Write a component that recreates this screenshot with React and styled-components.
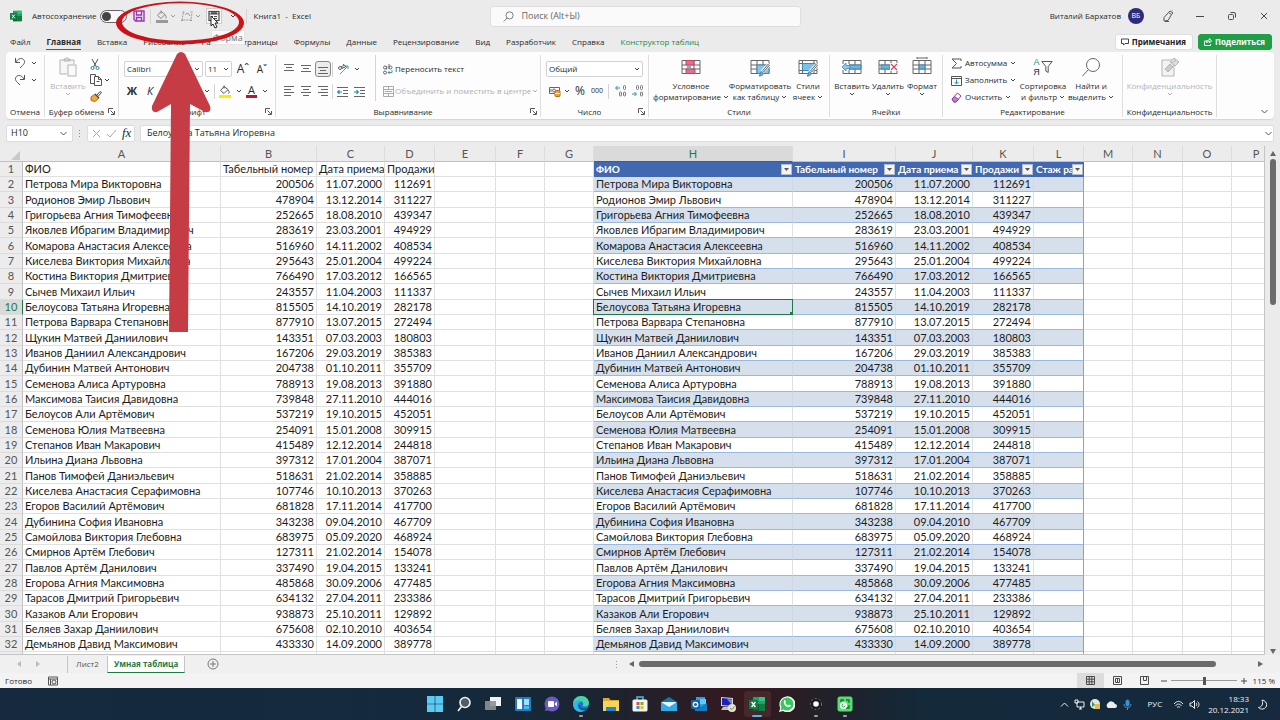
import React from 'react';
import styled, { createGlobalStyle, css } from 'styled-components';

const people = [
  ['Петрова Мира Викторовна', '200506', '11.07.2000', '112691'],
  ['Родионов Эмир Львович', '478904', '13.12.2014', '311227'],
  ['Григорьева Агния Тимофеевна', '252665', '18.08.2010', '439347'],
  ['Яковлев Ибрагим Владимирович', '283619', '23.03.2001', '494929'],
  ['Комарова Анастасия Алексеевна', '516960', '14.11.2002', '408534'],
  ['Киселева Виктория Михайловна', '295643', '25.01.2004', '499224'],
  ['Костина Виктория Дмитриевна', '766490', '17.03.2012', '166565'],
  ['Сычев Михаил Ильич', '243557', '11.04.2003', '111337'],
  ['Белоусова Татьяна Игоревна', '815505', '14.10.2019', '282178'],
  ['Петрова Варвара Степановна', '877910', '13.07.2015', '272494'],
  ['Щукин Матвей Даниилович', '143351', '07.03.2003', '180803'],
  ['Иванов Даниил Александрович', '167206', '29.03.2019', '385383'],
  ['Дубинин Матвей Антонович', '204738', '01.10.2011', '355709'],
  ['Семенова Алиса Артуровна', '788913', '19.08.2013', '391880'],
  ['Максимова Таисия Давидовна', '739848', '27.11.2010', '444016'],
  ['Белоусов Али Артёмович', '537219', '19.10.2015', '452051'],
  ['Семенова Юлия Матвеевна', '254091', '15.01.2008', '309915'],
  ['Степанов Иван Макарович', '415489', '12.12.2014', '244818'],
  ['Ильина Диана Львовна', '397312', '17.01.2004', '387071'],
  ['Панов Тимофей Даниэльевич', '518631', '21.02.2014', '358885'],
  ['Киселева Анастасия Серафимовна', '107746', '10.10.2013', '370263'],
  ['Егоров Василий Артёмович', '681828', '17.11.2014', '417700'],
  ['Дубинина София Ивановна', '343238', '09.04.2010', '467709'],
  ['Самойлова Виктория Глебовна', '683975', '05.09.2020', '468924'],
  ['Смирнов Артём Глебович', '127311', '21.02.2014', '154078'],
  ['Павлов Артём Данилович', '337490', '19.04.2015', '133241'],
  ['Егорова Агния Максимовна', '485868', '30.09.2006', '477485'],
  ['Тарасов Дмитрий Григорьевич', '634132', '27.04.2011', '233386'],
  ['Казаков Али Егорович', '938873', '25.10.2011', '129892'],
  ['Беляев Захар Даниилович', '675608', '02.10.2010', '403654'],
  ['Демьянов Давид Максимович', '433330', '14.09.2000', '389778'],
];

const columns = [
  ['A', 198], ['B', 96], ['C', 68], ['D', 50], ['E', 61], ['F', 49], ['G', 49], ['H', 199],
  ['I', 103], ['J', 77], ['K', 61], ['L', 50], ['M', 49], ['N', 50], ['O', 49], ['P', 49],
];

const GlobalStyle = createGlobalStyle`
  * { box-sizing: border-box; }
  body { margin: 0; overflow: hidden; }
  button, input, select {
    font: inherit;
    color: inherit;
    background: none;
    border: 0;
    margin: 0;
    padding: 0;
    outline: 0;
  }
  button { display: flex; align-items: center; justify-content: center; white-space: nowrap; }
  svg { display: block; flex: none; }
`;

/* ---------- icons ---------- */

const Svg = ({ w = 16, h = w, box, children, ...rest }) => (
  <svg width={w} height={h} viewBox={box || `0 0 ${w} ${h}`} fill="none" stroke="#4a4a4a" strokeWidth="1" aria-hidden="true" {...rest}>
    {children}
  </svg>
);

const Chevron = ({ size = 6, color = '#444' }) => (
  <Svg w={size} box="0 0 6 6" stroke={color}><path d="M1 2l2 2 2-2" /></Svg>
);

const ThinChevron = ({ size = 9 }) => (
  <Svg w={size} box="0 0 9 9" stroke="#555"><path d="M1.500 3l3 3 3-3" /></Svg>
);

const ExcelLogo = ({ size = 12 }) => (
  <Svg w={size} box="0 0 16 16" stroke="none">
    <path d="M4 1h11a1 1 0 0 1 1 1v12a1 1 0 0 1-1 1H4z" fill="#21a366" />
    <path d="M4 8h6v7H4z" fill="#185c37" />
    <path d="M10 8h6v6a1 1 0 0 1-1 1h-5z" fill="#107c41" />
    <path d="M10 1h5a1 1 0 0 1 1 1v3h-6z" fill="#33c481" />
    <rect y="4" width="9" height="9" rx="1" fill="#107c41" />
    <path d="M2.600 6l3.800 5M6.400 6l-3.800 5" stroke="#fff" strokeWidth="1.300" />
  </Svg>
);

const SaveIcon = () => (
  <Svg w={12} stroke="#9b35b5" strokeWidth="1.400">
    <path d="M1 1h10v10H2.500L1 9.500z M3.500 1v4h5V1 M3.500 11V7.500h5V11" />
  </Svg>
);

const BucketIcon = ({ bar = '#f8f000', stroke = '#555' }) => (
  <Svg w={12} h={13} stroke={stroke}>
    <path d="M5 1.500L1.500 5.500l3.500 3 4-4zM5 3.500V0.500M9 5c1.500 1.500 1.500 3 .5 3.500" />
    <path d="M0 11.500h12" stroke={bar} strokeWidth="3" />
  </Svg>
);

const ShapeIcon = () => (
  <Svg w={12} stroke="#999">
    <path d="M2.500 2.500L1 10h9l1-7" strokeDasharray="2 1" /><path d="M1.500 2h2M9.500 2h2M0 10.500h2M9 10.500h2M4 4.500l3-1.500 2 3" />
  </Svg>
);

const FormIcon = () => (
  <Svg w={12} strokeWidth="1.200">
    <rect x="1" y="1.500" width="10" height="9" />
    <path d="M1 4h10M3 2.800h6M3 6.500h2M6 6.500h3M3 8.500h2M6 8.500h3" />
  </Svg>
);

const SearchIcon = ({ size = 11 }) => (
  <Svg w={size} box="0 0 20 20" stroke="#666" strokeWidth={size > 14 ? 1 : 1.5}>
    <circle cx="12" cy="8" r="6.500" /><path d="M7.500 12.500L1.500 19" />
  </Svg>
);

const PenIcon = () => (
  <Svg w={12} stroke="#555"><path d="M2 7.500L6.500 2.500l3 2L6 10.500l-4 .5zM6.500 2.500L8 1l3 2-1.500 1.500M3 11.500h4M10 .5l.5-.5" /></Svg>
);

const UndoIcon = ({ flip }) => (
  <Svg w={12} stroke="#555" transform={flip ? 'scale(-1 1)' : undefined}>
    <path d="M1.500 1v4.500H6M2 5C4 1.500 7.500.5 9.500 2.500s1 4-1 6L6 11" />
  </Svg>
);

const PasteIcon = () => (
  <Svg w={18} h={20} stroke="#b4b4b4">
    <path d="M8 17H1V3h14v4M5 4V2h2c0-2 2-2 2 0h2v2z" fill="#f6f6f6" />
    <rect x="9" y="8" width="8" height="11" fill="#fafafa" />
  </Svg>
);

const ScissorsIcon = () => (
  <Svg w={10} h={11} stroke="#555">
    <path d="M2 0l4.500 8M8 0L3.500 8" /><circle cx="2.500" cy="9" r="1.500" stroke="#2a8ab8" /><circle cx="7.500" cy="9" r="1.500" stroke="#2a8ab8" />
  </Svg>
);

const CopyIcon = () => (
  <Svg w={12} stroke="#555"><path d="M4.500 9.500h-4v-9h5v2M4.500 2.500h4l3 3v6h-7zM8.500 2.500v3h3M6.500 7.500h3" /></Svg>
);

const BrushIcon = () => (
  <Svg w={12} h={11}>
    <path d="M7 4l3-3.500 1.500 1L8.500 5" /><path d="M1 6l4-3 4 4-4 3.500-4-1z" fill="#f2a83b" stroke="#b86c1a" />
    <path d="M5 3l4 4" strokeWidth="1.500" />
  </Svg>
);

const LinesIcon = ({ kind = 'left', v = 0 }) => {
  const rows = {
    left: 'M0 1.500h10M0 4.500h7M0 7.500h10M0 10.500h7',
    center: 'M0 1.500h10M2 4.500h6M0 7.500h10M2 10.500h6',
    right: 'M0 1.500h10M3 4.500h7M0 7.500h10M3 10.500h7',
    three: 'M0 2.500h10M2 5.500h6M0 8.500h10',
  };
  return <Svg w={10} h={12} stroke="#666"><path d={rows[kind]} transform={`translate(0 ${v})`} /></Svg>;
};

const OrientIcon = () => (
  <Svg w={12} stroke="#666">
    <path d="M3 11L11 3M8 3h3v3" stroke="#4c9fb8" /><circle cx="3" cy="5" r="1.500" /><path d="M4.500 3l1 3M6 1l3 3" /><circle cx="7" cy="3.500" r="1.300" />
  </Svg>
);

const IndentIcon = ({ flip }) => (
  <Svg w={11} h={11} stroke="#666">
    <path d="M0 1.500h11M6 4.500h5M6 7.500h5M0 10.500h11" />
    <path d={flip ? 'M0 6h4M2.500 4.300L4.300 6 2.500 7.700' : 'M5 6H1M2.500 4.300L.700 6l1.800 1.700'} stroke="#1f93a8" strokeWidth="1.200" />
  </Svg>
);

const WrapIcon = () => (
  <Svg w={10} h={11} stroke="#666">
    <circle cx="2" cy="3.500" r="1.500" /><path d="M3.700 2v3.500M6 0v5" /><circle cx="7.500" cy="3.500" r="1.500" />
    <circle cx="2" cy="8.500" r="1.500" /><path d="M9 6v2.500H5M6.500 7L5 8.500 6.500 10" stroke="#3d9ab0" />
  </Svg>
);

const MergeIcon = () => (
  <Svg w={11} h={11} stroke="#aaa"><path d="M.5.5h10v10H.5zM.5 3.500h10M.5 7.500h10M5.500.5v3M5.500 7.500v3M2 5.500h7" /></Svg>
);

const MoneyIcon = () => (
  <Svg w={12} h={11} stroke="#666">
    <path d="M.5 1.500h10v6H.5z" /><circle cx="5" cy="4.500" r="1.500" /><path d="M2 3v3" />
    <rect x="6" y="4.500" width="5" height="6" rx="1" fill="#e8a33d" stroke="#b56f1e" /><path d="M6 7.500h5" stroke="#fff" />
  </Svg>
);

const DecimalIcon = ({ less }) => (
  <Svg w={11} h={12} stroke="#777">
    {less ? (
      <>
        <path d="M0 9h4M2.500 7L4.500 9l-2 2" stroke="#1f93a8" />
        <rect x="4.500" y=".5" width="2" height="4" rx="1" /><rect x="8.500" y=".5" width="2" height="4" rx="1" />
        <rect x="8.500" y="7" width="2" height="4" rx="1" />
      </>
    ) : (
      <>
        <path d="M5 3H1M2.500 1L.5 3l2 2" stroke="#1f93a8" />
        <rect x="8.500" y=".5" width="2" height="4" rx="1" /><rect x="4.500" y="7" width="2" height="4" rx="1" />
        <rect x="8.500" y="7" width="2" height="4" rx="1" />
      </>
    )}
  </Svg>
);

const GridIcon = ({ kind }) => (
  <Svg w={20} h={20} stroke="#666">
    {kind !== 'styles' && <path d="M1 3.500h18v13H1zM1 8h18M1 12h18M7 3.500v13M13 3.500v13" />}
    {kind === 'cond' && (
      <>
        <path d="M5 3.500h8V8H5zM5 12h9v4.500H5z" fill="#ef6a84" stroke="#c94460" />
        <path d="M6 8.500h4v3H6z" fill="#6bb4e0" stroke="none" />
      </>
    )}
    {kind === 'table' && <path d="M7 8h12v8.500H7z" fill="#86c5ea" stroke="#3f87b3" />}
    {kind === 'styles' && <path d="M1 3.500h18v13H1zM1 6.500h18M1 13.500h18M4.500 3.500v13M16 3.500v13" />}
    {kind === 'styles' && <path d="M4.500 6.500h12v7h-12z" fill="#7bc0ea" stroke="#3f87b3" />}
    {(kind === 'table' || kind === 'styles') && (
      <>
        <path d="M19.500 7L12 15" stroke="#fff" strokeWidth="4" />
        <path d="M19 7.500l-6 7" stroke="#666" strokeWidth="2.500" /><path d="M19 7.500l-6 7" stroke="#fff" />
        <path d="M9 19c2 0 4-.5 4.500-3l-2-1.500C10 15 11 17 9 19z" fill="#5fb0e0" stroke="#3f87b3" />
      </>
    )}
    {kind === 'insert' && (
      <>
        <path d="M0 7h7v6H0z" fill="#fdfdfd" stroke="none" />
        <path d="M7 8h12v4H7z" fill="#6bb4e0" stroke="#3f87b3" />
        <path d="M0 10l4-4v2.500h4v3H4V14z" fill="#8ccbee" stroke="#3f87b3" strokeWidth=".8" />
      </>
    )}
    {kind === 'delete' && (
      <>
        <path d="M3 8h9v4H3z" fill="#6bb4e0" stroke="#3f87b3" /><path d="M12 6h8v8h-8z" fill="#fff" stroke="none" />
        <path d="M13 7l6 6M19 7l-6 6" stroke="#d8455f" strokeWidth="1.300" />
      </>
    )}
    {kind === 'format' && (
      <>
        <path d="M7 8h6v4H7z" fill="#6bb4e0" stroke="#3f87b3" /><path d="M5 1h10M5 0v2M15 0v2" />
      </>
    )}
  </Svg>
);

const SumIcon = () => <Svg w={11} h={11} stroke="#555"><path d="M10 3V1H1l4.500 4.500L1 10h9V8" /></Svg>;
const FillIcon = () => (
  <Svg w={11} h={11} stroke="#555"><path d="M.5 1.500h10v9H.5zM.5 3.500h10" /><path d="M5.500 4.500v4.500M3.500 7l2 2 2-2" stroke="#1f93a8" /></Svg>
);
const EraserIcon = () => (
  <Svg w={11} h={11} stroke="#8d3ba0"><path d="M6.500 1l3.500 3-5 6H3L1 7z" fill="#fff" /><path d="M3.500 4.500l4 3L5 10H3L1 7z" fill="#c77ad6" /></Svg>
);
const FunnelIcon = () => (
  <Svg w={12} h={14} stroke="#555"><path d="M.8 1.500h10.400L7.200 6.500v6l-2.400-1.500V6.500z" /></Svg>
);
const SecretIcon = () => (
  <Svg w={20} h={20} stroke="#b4b4b4">
    <path d="M2 3h12v16H2z" fill="#f3f3f3" /><path d="M5 12l5-5 3 3-5 5z" fill="#ccc" />
    <path d="M10 5l4-4 5 4-4 4zM12 6l4-3" fill="#ddd" />
  </Svg>
);
const Launcher = () => (
  <Svg w={7} h={7} stroke="#555" strokeWidth="1"><path d="M.5 5V.5H5M2.500 2.500l3.500 3.500M6.500 3v3.500H3" /></Svg>
);

/* ---------- window chrome ---------- */

const Window = styled.div`
  height: 100vh;
  display: flex;
  flex-direction: column;
  position: relative;
  overflow: hidden;
  background: #ebebeb;
  color: #2a2a2a;
  font: 8px/12px "Open Sans", "Noto Sans", sans-serif;
`;

const TitleBar = styled.header`
  flex: none;
  height: 32px;
  padding-left: 10px;
  display: grid;
  grid-template-columns: 1fr 311px 1fr;
  align-items: center;
`;

const Cluster = styled.div`
  display: flex;
  align-items: center;
  gap: ${({ $gap = 0 }) => $gap}px;
  ${({ $end }) => $end && 'justify-content: flex-end;'}
  ${({ $push }) => $push && 'margin-left: auto;'}
  ${({ $pad }) => $pad && `padding: ${$pad};`}
  white-space: nowrap;
`;

const AutoSave = styled.label`
  display: flex;
  align-items: center;
  gap: 3px;
  margin: 0 6px 0 10px;
`;

const Toggle = styled.input`
  appearance: none;
  width: 27px;
  height: 13px;
  border: 1px solid #666;
  border-radius: 7px;
  background: #f8f8f8;
  &::before {
    content: '';
    display: block;
    width: 9px;
    height: 9px;
    margin: 1px;
    border-radius: 50%;
    background: #444;
  }
`;

const QuickButton = styled.button`
  width: ${({ $active }) => ($active ? 16 : 12)}px;
  height: 16px;
  ${({ $active }) => $active && 'background: #f8f8f8; border: 1px solid #ccc;'}
`;

const Divider = styled.span`
  width: 1px;
  height: ${({ $h = 15 }) => $h}px;
  background: #d4d4d4;
`;

const SearchBox = styled.label`
  height: 21px;
  display: flex;
  align-items: center;
  gap: 8px;
  padding: 0 12px;
  border: 1px solid #dedede;
  border-radius: 3px;
  background: #fafafa;
  font-size: 9px;
  input { flex: 1; &::placeholder { color: #666; opacity: 1; } }
`;

const Avatar = styled.span`
  width: 16px;
  height: 16px;
  border-radius: 50%;
  background: #2f2a7c;
  color: #fff;
  font-size: 7px;
  line-height: 16px;
  text-align: center;
`;

const WindowButton = styled.button`
  width: 32px;
  height: 24px;
`;

const TabBar = styled.nav`
  flex: none;
  height: 20px;
  padding: 0 8px 0 10px;
  display: flex;
  align-items: center;
  gap: 16px;
  white-space: nowrap;
`;

const Tab = styled.a`
  height: 16px;
  line-height: 16px;
  color: ${({ $special }) => ($special ? '#1e8a45' : '#2a2a2a')};
  text-decoration: none;
  ${({ $active }) => $active && css`
    font-weight: 700;
    border-bottom: 1px solid #1e7a45;
  `}
`;

const HeadButton = styled.button`
  height: 16px;
  padding: 0 6px 0 5px;
  gap: 3px;
  border-radius: 3px;
  font-weight: 700;
  background: ${({ $green }) => ($green ? '#1f9d47' : '#fff')};
  color: ${({ $green }) => ($green ? '#fff' : '#222')};
  border: 1px solid ${({ $green }) => ($green ? '#1f9d47' : '#dedede')};
`;

/* ---------- ribbon ---------- */

const Ribbon = styled.section`
  flex: none;
  height: 67px;
  margin: 0 6px;
  display: flex;
  padding: 3px 0 2px;
  background: #fdfdfd;
  border-radius: 4px;
  box-shadow: 0 1px 1px #d4d4d4;
`;

const GroupBox = styled.div`
  width: ${({ $w }) => $w}px;
  display: flex;
  flex-direction: column;
  border-right: 1px solid #dedede;
  flex: none;
`;

const GroupBody = styled.div`
  flex: 1;
  display: flex;
  padding: 0 ${({ $pad = 5 }) => $pad}px;
  gap: ${({ $gap = 0 }) => $gap}px;
  justify-content: ${({ $align = 'flex-start' }) => $align};
`;

const GroupFooter = styled.div`
  height: 12px;
  display: flex;
  align-items: center;
  justify-content: center;
  padding-right: ${({ $launch }) => ($launch ? 3 : 0)}px;
  line-height: 11px;
  white-space: nowrap;
  ${({ $launch }) => $launch && 'span { flex: 1; text-align: center; }'}
`;

const Stack = styled.div`
  display: flex;
  flex-direction: column;
  justify-content: ${({ $top }) => ($top ? 'flex-start' : 'center')};
  gap: ${({ $gap = 0 }) => $gap}px;
  ${({ $grow }) => $grow && 'flex: 1;'}
  ${({ $w }) => $w && `width: ${$w}px;`}
  ${({ $pad }) => $pad && `padding: ${$pad};`}
  min-width: 0;
`;

const Tool = styled.button`
  height: 16px;
  min-width: ${({ $w = 12 }) => $w}px;
  gap: ${({ $gap = 5 }) => $gap}px;
  justify-content: ${({ $left }) => ($left ? 'flex-start' : 'center')};
  color: ${({ $off }) => ($off ? '#b0b0b0' : '#2a2a2a')};
  ${({ $pressed }) => $pressed && 'background: #ececec; border: 1px solid #888; border-radius: 3px;'}
`;

const BigTool = styled.button`
  flex-direction: column;
  justify-content: flex-start;
  width: ${({ $w }) => $w}px;
  padding-top: 2px;
  line-height: 11px;
  color: ${({ $off }) => ($off ? '#b4b4b4' : '#2a2a2a')};
  > svg:first-child, > div:first-child { margin-bottom: 3px; }
`;

const Letter = styled.span`
  font-size: ${({ $size = 12 }) => $size}px;
  font-weight: ${({ $bold }) => ($bold ? 700 : 400)};
  font-style: ${({ $italic }) => ($italic ? 'italic' : 'normal')};
  text-decoration: ${({ $line }) => ($line ? 'underline' : 'none')};
  ${({ $color }) => $color && `color: ${$color};`}
  ${({ $tight }) => $tight && 'font-family: "Liberation Sans", sans-serif; line-height: 10px;'}
  ${({ $bar }) => $bar && `border-bottom: 3px solid ${$bar}; padding: 0 2px; line-height: 10px;`}
`;

const Picker = styled.div`
  position: relative;
  width: ${({ $w }) => $w}px;
  height: 16px;
  border: 1px solid #d2d2d2;
  border-radius: 2px;
  background: #fff;
  select { appearance: none; width: 100%; height: 100%; padding-left: 2px; }
  svg { position: absolute; right: 2px; top: 4px; pointer-events: none; }
`;

const Select = ({ w, label, value }) => (
  <Picker $w={w}>
    <select aria-label={label} defaultValue={value}><option>{value}</option></select>
    <Chevron />
  </Picker>
);

const Group = ({ w, title, launcher, children, ...body }) => (
  <GroupBox $w={w}>
    <GroupBody {...body}>{children}</GroupBody>
    <GroupFooter $launch={launcher}>
      <span>{title}</span>
      {launcher && <button aria-label={`${title}: параметры`}><Launcher /></button>}
    </GroupFooter>
  </GroupBox>
);

/* ---------- formula bar ---------- */

const FormulaRow = styled.div`
  flex: none;
  height: 27px;
  padding: 5px 6px 4px;
  display: flex;
  gap: 5px;
  align-items: center;
`;

const FormulaBox = styled.div`
  height: 17px;
  display: flex;
  align-items: center;
  gap: 5px;
  background: #fff;
  border: 1px solid #dcdcdc;
  border-radius: 2px;
  padding: 0 4px;
  font-size: 9px;
  ${({ $w }) => ($w ? `width: ${$w}px;` : 'flex: 1; padding-left: 6px; padding-right: 0;')}
  input { flex: 1; min-width: 0; }
  em { font: italic 13px/14px "Liberation Serif", serif; }
`;

/* ---------- sheet ---------- */

const SheetArea = styled.main`
  flex: 1;
  min-height: 0;
  display: flex;
`;

const SheetView = styled.div`
  flex: 1;
  min-width: 0;
  overflow: hidden;
  border-right: 1px solid #c4c4c4;
  border-bottom: 1px solid #c4c4c4;
  background: #fff;
`;

const Sheet = styled.table`
  width: 100%;
  min-width: 1281px;
  table-layout: fixed;
  border-collapse: separate;
  border-spacing: 0;
  font: 11px/14px Lato, sans-serif;
  color: #1c1c1c;
  thead tr { height: 16px; }
  tbody tr { height: 15px; }
  tbody tr:nth-child(3n) { height: 16px; }
`;

const ColHead = styled.th`
  padding: 0;
  font-weight: 400;
  color: ${({ $active }) => ($active ? '#1e7a45' : '#555')};
  background: ${({ $active }) => ($active ? '#dadada' : '#ececec')};
  border-right: 1px solid #dcdcdc;
  border-bottom: 1px solid ${({ $active }) => ($active ? '#1e7a45' : '#c0c0c0')};
`;

const Corner = styled.th`
  padding: 3px 3px 0 11px;
  background: #ececec;
  border-bottom: 1px solid #c0c0c0;
`;

const RowHead = styled(ColHead)`
  border-right-color: ${({ $active }) => ($active ? '#1e7a45' : '#c0c0c0')};
  border-bottom-color: #dcdcdc;
`;

const Cell = styled.td`
  padding: 0 2px;
  height: inherit;
  position: relative;
  white-space: nowrap;
  overflow: hidden;
  text-align: ${({ $num }) => ($num ? 'right' : 'left')};
  border-right: 1px solid #e0e0e0;
  border-bottom: 1px solid #e0e0e0;
  ${({ $table, $band }) => $table && css`
    border-bottom-color: #9bb9de;
    border-right-color: ${$band ? '#ccd8e6' : '#e0e0e0'};
    background: ${$band ? '#d6e0ec' : '#fff'};
  `}
  ${({ $head }) => $head && css`
    background: #4168b1;
    border-color: #4168b1;
    color: #fff;
    font-size: 10px;
    font-weight: 700;
  `}
  ${({ $edge }) => $edge && 'border-right-color: #7fa3d4;'}
  ${({ $selected }) => $selected && css`
    overflow: visible;
    &::before {
      content: '';
      position: absolute;
      inset: -1px -1px -1px -1px;
      border: 1px solid #1e7a45;
    }
    &::after {
      content: '';
      position: absolute;
      right: -2px;
      bottom: -2px;
      width: 4px;
      height: 4px;
      background: #1e7a45;
    }
  `}
`;

const FilterButton = styled.button`
  position: absolute;
  right: 0;
  top: 2px;
  width: 11px;
  height: 11px;
  background: #f4f4f4;
  border: 1px solid #b4bccb;
`;

const ScrollColumn = styled.div`
  width: 15px;
  display: flex;
  flex-direction: column;
  align-items: center;
  padding: 4px 0 1px;
  gap: 3px;
`;

const ScrollTrack = styled.div`
  flex: 1;
  display: flex;
  ${({ $down }) => $down && 'width: 6px;'}
`;

const Thumb = styled.div`
  background: #6b6b6b;
  border-radius: 3px;
  ${({ $down }) => ($down ? 'width: 6px; height: 30%;' : 'height: 6px; width: 94%;')}
`;

const Arrow = ({ dir }) => {
  const d = { up: 'M3 1l3 5H0z', down: 'M0 1h6L3 6z', left: 'M5 0v6L0 3z', right: 'M1 0v6l5-3z' };
  return <Svg w={6} stroke="none" fill="#666"><path d={d[dir]} /></Svg>;
};

const SheetTabs = styled.div`
  flex: none;
  height: 18px;
  display: flex;
  align-items: center;
  background: #f0f0f0;
  padding: 0 17px;
  > svg { margin-right: 13px; }
`;

const SheetTab = styled.button`
  height: 17px;
  align-self: flex-start;
  padding: 0 8px;
  color: #555;
  border-left: 1px solid #c4c4c4;
  ${({ $active }) => $active && css`
    background: #fff;
    color: #1e7a45;
    font-weight: 700;
    padding: 0 6px;
    border-right: 1px solid #c4c4c4;
    border-bottom: 1px solid #1e7a45;
  `}
`;

const HScroll = styled.div`
  width: 52%;
  margin-left: auto;
  display: flex;
  align-items: center;
  gap: 4px;
`;

const StatusBar = styled.footer`
  flex: none;
  height: 15px;
  display: flex;
  align-items: center;
  padding: 0 5px;
  background: #f3f3f3;
`;

const ViewButton = styled.button`
  width: 27px;
  height: 15px;
  background: ${({ $active }) => ($active ? '#dcdcdc' : 'none')};
`;

const ZoomRange = styled.input`
  appearance: none;
  width: 66px;
  height: 9px;
  background: linear-gradient(#999, #999) center / 100% 1px no-repeat;
  &::-webkit-slider-thumb {
    appearance: none;
    width: 3px;
    height: 8px;
    background: #555;
  }
`;

/* ---------- taskbar ---------- */

const TaskBar = styled.div`
  flex: none;
  height: 32px;
  display: grid;
  grid-template-columns: 1fr 440px 1fr;
  color: #f2f2f2;
  background: linear-gradient(90deg, #16293e 0%, #142a3b 38%, #1d232f 48%, #35191d 58%, #1e222b 66%, #14293a 72%, #16293e 100%);
`;

const AppRow = styled.div`
  display: grid;
  grid-template-columns: repeat(15, 1fr);
`;

const AppButton = styled.button`
  position: relative;
  margin: 3px 1px;
  border-radius: 3px;
  ${({ $active }) => $active && 'background: #45282b;'}
  ${({ $running, $active }) => ($running || $active) && css`
    &::after {
      content: '';
      position: absolute;
      bottom: 0;
      width: ${$active ? 10 : 4}px;
      height: 2px;
      border-radius: 1px;
      background: ${$active ? '#5ab4e8' : '#9aa3ab'};
    }
  `}
`;

const Clock = styled.div`
  text-align: right;
  line-height: 11px;
  padding: 0 3px;
`;

const apps = [
  ['Пуск', <path key="p" d="M0 0h7.700v7.700H0zM8.300 0H16v7.700H8.300zM0 8.300h7.700V16H0zM8.300 8.300H16V16H8.300z" fill="#5accf4" />],
  ['Поиск', <g key="p" fill="none" stroke="#f4f4f4" strokeWidth="1.600"><circle cx="9" cy="6.500" r="5" fill="#4d5d6a" /><path d="M5.500 10.500L2 15" /></g>],
  ['Представление задач', <g key="p"><path d="M5 1h11v9H5z" fill="#f2f2f2" /><path d="M0 5h11v9H0z" fill="#8d9094" opacity=".9" /></g>],
  ['Мини-приложения', <g key="p"><rect y="1" width="16" height="14" rx="1" fill="#1d7fc4" /><path d="M2 3h5v10H2z" fill="#fff" /><path d="M9 3h5v6H9z" fill="#a7def7" /><path d="M9 10h5v3H9z" fill="#53b5ea" /></g>],
  ['Чат', <g key="p"><circle cx="8" cy="8" r="7.500" fill="#6a5bc2" /><path d="M1 15l1-5 4 4z" fill="#6a5bc2" /><rect x="4" y="5" width="6" height="6" rx="1" fill="#fff" /><path d="M10.500 8L13 5.500v5z" fill="#fff" /></g>],
  ['Edge', <g key="p"><circle cx="8" cy="8" r="8" fill="#1b78c8" /><path d="M0 8C0 3 4 0 8 0c5 0 8 3.500 8 7 0 2-1.500 3.500-4 3.500-1.500 0-2.500-.5-2-1.500C11 6 8 4 5 5 2 5.500.500 7 0 8z" fill="#4ad4a0" /><path d="M0 8c1-4 7-5 9-2-3-.5-5 2-4 5s4 4 7 3c-5 4-12 1-12-6z" fill="#36b5e2" /><path d="M7 9c-1 3 3 5 7 3-1 2-4 2.500-6 1S5.500 10 7 9z" fill="#123b62" /></g>, true],
  ['Проводник', <g key="p"><path d="M0 2h6l1.500 2H16v11H0z" fill="#e0a92a" /><path d="M0 5h16v10H0z" fill="#f8d45c" /><path d="M3 11h10v4H3z" fill="#2a84c8" /></g>],
  ['Store', <g key="p"><path d="M5 4V1h6v3" fill="none" stroke="#58b5e8" strokeWidth="1.500" /><rect x=".5" y="3.500" width="15" height="12" rx="1.500" fill="#f3f3f3" /><path d="M4.500 6h3v3h-3z" fill="#e84b30" /><path d="M8.500 6h3v3h-3z" fill="#79b52a" /><path d="M4.500 10h3v3h-3z" fill="#2797dd" /><path d="M8.500 10h3v3h-3z" fill="#f4b71c" /></g>],
  ['Почта', <g key="p"><path d="M0 6l8-5 8 5v9H0z" fill="#1673b8" /><path d="M1 6h14v8H1z" fill="#e8f6fd" /><path d="M0 6l8 5 8-5v9H0z" fill="#35a8e6" /></g>],
  ['Outlook', <g key="p"><path d="M5 1h9v10H5z" fill="#2a9fe0" /><path d="M9 3h6v5H9z" fill="#64c8f5" /><path d="M4 7l6 4 6-4v8H4z" fill="#1878c0" /><rect y="4" width="9" height="9" rx="1" fill="#1066ac" /><circle cx="4.500" cy="8.500" r="2.200" fill="none" stroke="#fff" strokeWidth="1.300" /></g>],
  ['Удалённый рабочий стол', <g key="p"><path d="M1 1l12 1v9L1 10z" fill="#d4d4d4" /><path d="M2 2l10 1v7L2 9z" fill="#2020b8" /><path d="M7 3l5 .5V9z" fill="#7f86dc" /><path d="M3 11h6l1 3H1z" fill="#c4c4c4" /><circle cx="12" cy="12" r="4" fill="#e1e4dd" /><path d="M10 12l2 1.500 2.500-3" stroke="#6a8a50" fill="none" /></g>],
  ['Excel', null, false, true],
  ['WhatsApp', <g key="p"><path d="M0 16l1.300-4A8 8 0 1 1 4 15z" fill="#fff" /><path d="M1.500 14.500l1-3A6.500 6.500 0 1 1 4.500 13.500z" fill="#35c759" /><path d="M5 4.500c1-1 1.500 0 2 1.500l-.7 1c.7 1.200 1.500 2 2.700 2.500l1-1c1.500.5 2.500 1 1.500 2-2 2.500-8-1.500-6.500-6z" fill="#fff" /></g>],
  ['Запись', <g key="p"><circle cx="8" cy="8" r="5.500" fill="#1a1a1a" stroke="#777" strokeDasharray="2 2" /><circle cx="8" cy="8" r="2.800" fill="#fff" /></g>, true],
  ['Camtasia', <g key="p"><rect x=".5" y=".5" width="15" height="15" rx="2.500" fill="#54e070" /><path d="M4 6V4h3M9 4h3v3M12 9v3H9" stroke="#1e6a30" fill="none" strokeWidth="1.300" /><circle cx="6.500" cy="9.500" r="3.500" fill="#fff" /><path d="M6.500 8A1.500 1.500 0 1 0 8 9.500" stroke="#2c9a48" fill="none" /></g>, true],
];

/* ---------- annotations ---------- */

const Hint = styled.div`
  position: absolute;
  left: 211px;
  top: 30px;
  height: 15px;
  padding: 0 1px;
  line-height: 14px;
  background: #fafafa;
  border: 1px solid #e4e4e4;
  color: #777;
  font-size: 9px;
`;

const Marks = styled.svg`
  position: absolute;
  left: 110px;
  top: 0;
  pointer-events: none;
`;

const tableHeads = ['ФИО', 'Табельный номер', 'Дата приема', 'Продажи', 'Стаж ра'];

function SheetGrid() {
  // the trailing blank row only peeks out under the last visible one
  const rows = [null, ...people, ['', '', '', '']];
  return (
    <Sheet>
      <colgroup>
        <col width="23" />
        {columns.map(([name, w]) => <col key={name} width={name === 'P' ? undefined : w} />)}
      </colgroup>
      <thead>
        <tr>
          <Corner aria-label="Выделить всё">
            <Svg w={9} stroke="none" fill="#c8c8c8"><path d="M9 0v9H0z" /></Svg>
          </Corner>
          {columns.map(([name]) => <ColHead key={name} scope="col" $active={name === 'H'}>{name}</ColHead>)}
        </tr>
      </thead>
      <tbody>
        {rows.map((row, i) => (
          <tr key={i}>
            <RowHead scope="row" $active={i === 9}>{i < 32 && i + 1}</RowHead>
            {row
              ? row.map((v, c) => <Cell key={c} $num={c > 0}>{v}</Cell>)
              : tableHeads.slice(0, 4).map((v) => <Cell key={v}>{v}</Cell>)}
            <Cell /><Cell /><Cell />
            {row
              ? [...row, ''].map((v, c) => (
                <Cell key={c} $table $num={c > 0} $band={i % 2 === 1} $edge={c === 4} $selected={i === 9 && c === 0}>{v}</Cell>
              ))
              : tableHeads.map((v) => (
                <Cell key={v} $head>
                  {v}
                  <FilterButton aria-label={`Фильтр: ${v}`}>
                    <Svg w={7} h={5} stroke="none" fill="#555"><path d="M1 1h5L3.500 4z" /></Svg>
                  </FilterButton>
                </Cell>
              ))}
            <Cell /><Cell /><Cell /><Cell />
          </tr>
        ))}
      </tbody>
    </Sheet>
  );
}

function HomeRibbon() {
  return (
    <Ribbon>
      <Group w={39} title="Отмена" $pad={9}>
        <Stack $top $gap={1}>
          <Tool aria-label="Отменить"><UndoIcon /><Chevron /></Tool>
          <Tool aria-label="Вернуть"><UndoIcon flip /><Chevron /></Tool>
        </Stack>
      </Group>
      <Group w={74} title="Буфер обмена" launcher $pad={4} $gap={3}>
        <BigTool $w={38} $off><PasteIcon />Вставить<Chevron color="#b4b4b4" /></BigTool>
        <Stack>
          <Tool $left aria-label="Вырезать"><ScissorsIcon /></Tool>
          <Tool $left $gap={2} aria-label="Копировать"><CopyIcon /><Chevron /></Tool>
          <Tool $left aria-label="Формат по образцу"><BrushIcon /></Tool>
        </Stack>
      </Group>
      <Group w={157} title="Шрифт" launcher>
        <Stack $gap={6}>
          <Cluster $gap={2}>
            <Select w={82} label="Шрифт" value="Calibri" />
            <Select w={28} label="Размер шрифта" value="11" />
            <Tool $w={18} $gap={0} aria-label="Увеличить размер"><Letter>Aˆ</Letter></Tool>
            <Tool $w={16} $gap={0} aria-label="Уменьшить размер"><Letter $size={10}>Aˇ</Letter></Tool>
          </Cluster>
          <Cluster $gap={4}>
            <Tool $w={16}><Letter $bold $size={11}>Ж</Letter></Tool>
            <Tool $w={12}><Letter $italic $size={11}>К</Letter></Tool>
            <Tool $w={24}><Letter $line $size={11}>Ч</Letter><Chevron /></Tool>
            <Tool $w={20} aria-label="Границы"><MergeIcon /><Chevron /></Tool>
            <Divider />
            <Tool aria-label="Цвет заливки"><BucketIcon /><Chevron /></Tool>
            <Tool><Letter $size={11} $bar="#c8102e">A</Letter><Chevron /></Tool>
          </Cluster>
        </Stack>
      </Group>
      <Group w={265} title="Выравнивание" launcher>
        <Stack $gap={6} $pad="0 8px 0 0">
          <Cluster $gap={1}>
            <Tool $w={16} aria-label="По верхнему краю"><LinesIcon kind="three" v={-1} /></Tool>
            <Tool $w={16} aria-label="По середине"><LinesIcon kind="three" /></Tool>
            <Tool $w={16} $pressed aria-label="По нижнему краю"><LinesIcon kind="three" v={2} /></Tool>
            <Divider />
            <Tool $w={28} aria-label="Ориентация"><OrientIcon /><Chevron /></Tool>
          </Cluster>
          <Cluster $gap={1}>
            <Tool $w={16} aria-label="По левому краю"><LinesIcon /></Tool>
            <Tool $w={16} aria-label="По центру"><LinesIcon kind="center" /></Tool>
            <Tool $w={16} aria-label="По правому краю"><LinesIcon kind="right" /></Tool>
            <Divider />
            <Tool $w={16} aria-label="Уменьшить отступ"><IndentIcon /></Tool>
            <Tool $w={16} aria-label="Увеличить отступ"><IndentIcon flip /></Tool>
          </Cluster>
        </Stack>
        <Divider $h={46} />
        <Stack $gap={6} $grow $pad="0 0 0 7px">
          <Tool $left $gap={2}><WrapIcon />Переносить текст</Tool>
          <Tool $left $off $gap={1}><MergeIcon />Объединить и поместить в центре<Chevron color="#b0b0b0" /></Tool>
        </Stack>
      </Group>
      <Group w={108} title="Число" launcher>
        <Stack $gap={6}>
          <Select w={97} label="Числовой формат" value="Общий" />
          <Cluster $gap={5} $pad="0 0 0 3px">
            <Tool $gap={3} aria-label="Финансовый формат"><MoneyIcon /><Chevron /></Tool>
            <Tool><Letter $size={12}>%</Letter></Tool>
            <Tool><Letter $size={7}>000</Letter></Tool>
            <Divider />
            <Tool aria-label="Увеличить разрядность"><DecimalIcon /></Tool>
            <Tool aria-label="Уменьшить разрядность"><DecimalIcon less /></Tool>
          </Cluster>
        </Stack>
      </Group>
      <Group w={181} title="Стили" $pad={4}>
        <BigTool $w={76}><GridIcon kind="cond" />Условное<Cluster $gap={2}>форматирование<Chevron /></Cluster></BigTool>
        <BigTool $w={62}><GridIcon kind="table" />Форматировать<Cluster $gap={2}>как таблицу<Chevron /></Cluster></BigTool>
        <BigTool $w={34}><GridIcon kind="styles" />Стили<Cluster $gap={2}>ячеек<Chevron /></Cluster></BigTool>
      </Group>
      <Group w={113} title="Ячейки" $pad={4}>
        <BigTool $w={36}><GridIcon kind="insert" />Вставить<Chevron /></BigTool>
        <BigTool $w={36}><GridIcon kind="delete" />Удалить<Chevron /></BigTool>
        <BigTool $w={32}><GridIcon kind="format" />Формат<Chevron /></BigTool>
      </Group>
      <Group w={180} title="Редактирование" $pad={8}>
        <Stack $gap={1} $w={70}>
          <Tool $left $gap={3}><SumIcon />Автосумма<Chevron /></Tool>
          <Tool $left $gap={3}><FillIcon />Заполнить<Chevron /></Tool>
          <Tool $left $gap={3}><EraserIcon />Очистить<Chevron /></Tool>
        </Stack>
        <BigTool $w={52}>
          <Cluster $gap={1}>
            <Stack>
              <Letter $size={9} $tight $color="#1f8fa5">А</Letter>
              <Letter $size={9} $tight>Я</Letter>
            </Stack>
            <FunnelIcon />
          </Cluster>
          Сортировка<Cluster $gap={2}>и фильтр<Chevron /></Cluster>
        </BigTool>
        <BigTool $w={46}><SearchIcon size={20} />Найти и<Cluster $gap={2}>выделить<Chevron /></Cluster></BigTool>
      </Group>
      <Group w={94} title="Конфиденциальность" $pad={4} $align="center">
        <BigTool $w={84} $off><SecretIcon />Конфиденциальность<Chevron color="#b4b4b4" /></BigTool>
      </Group>
      <Cluster $push $pad="50px 5px 0 0">
        <button aria-label="Свернуть ленту"><ThinChevron /></button>
      </Cluster>
    </Ribbon>
  );
}

export default function App() {
  return (
    <Window>
      <GlobalStyle />
      <TitleBar>
        <Cluster>
          <ExcelLogo />
          <AutoSave>Автосохранение<Toggle type="checkbox" /></AutoSave>
          <Cluster $gap={5}>
            <QuickButton aria-label="Сохранить"><SaveIcon /></QuickButton>
            <Divider />
            <Cluster $gap={2}>
              <QuickButton aria-label="Заливка"><BucketIcon bar="#999" stroke="#888" /></QuickButton>
              <Chevron color="#999" />
            </Cluster>
            <Cluster $gap={2}>
              <QuickButton aria-label="Фигура"><ShapeIcon /></QuickButton>
              <Chevron color="#999" />
            </Cluster>
            <QuickButton $active aria-label="Форма"><FormIcon /></QuickButton>
            <Cluster $pad="0 5px 0 3px"><Chevron /></Cluster>
            <Divider />
          </Cluster>
          <Cluster $pad="0 0 0 7px">Книга1&nbsp; -&nbsp; Excel</Cluster>
        </Cluster>
        <SearchBox>
          <SearchIcon />
          <input aria-label="Поиск" placeholder="Поиск (Alt+Ы)" />
        </SearchBox>
        <Cluster $end>
          <Cluster $gap={7} $pad="0 8px 0 0">Виталий Бархатов<Avatar>ВБ</Avatar></Cluster>
          <WindowButton aria-label="Рисование"><PenIcon /></WindowButton>
          <WindowButton aria-label="Свернуть"><Svg w={8}><path d="M0 4.500h8" /></Svg></WindowButton>
          <WindowButton aria-label="Развернуть"><Svg w={8}><rect x=".5" y="2.500" width="5" height="5" rx="1" /><path d="M2.500.5H6A1.500 1.500 0 0 1 7.500 2v3.500" /></Svg></WindowButton>
          <WindowButton aria-label="Закрыть"><Svg w={8}><path d="M1 1l6 6M7 1L1 7" /></Svg></WindowButton>
        </Cluster>
      </TitleBar>

      <TabBar>
        <Tab href="#file">Файл</Tab>
        <Tab href="#home" $active>Главная</Tab>
        <Tab href="#insert">Вставка</Tab>
        <Tab href="#draw">Рисование</Tab>
        <Tab href="#layout">Разметка страницы</Tab>
        <Tab href="#formulas">Формулы</Tab>
        <Tab href="#data">Данные</Tab>
        <Tab href="#review">Рецензирование</Tab>
        <Tab href="#view">Вид</Tab>
        <Tab href="#developer">Разработчик</Tab>
        <Tab href="#help">Справка</Tab>
        <Tab href="#design" $special>Конструктор таблиц</Tab>
        <Cluster $push $gap={5}>
          <HeadButton><Svg w={8} stroke="#444"><path d="M.5 1h7v4.500H4L2.500 7V5.500h-2z" /></Svg>Примечания</HeadButton>
          <HeadButton $green><Svg w={8} stroke="#fff"><path d="M3 3H.5v4.500h6V6M2.500 5c0-2 1-3 3-3V.5L7.500 3l-2 2V3.500c-1.500 0-2.500.5-3 1.500z" /></Svg>Поделиться</HeadButton>
        </Cluster>
      </TabBar>

      <HomeRibbon />

      <FormulaRow>
        <FormulaBox $w={67}>
          <input aria-label="Имя" defaultValue="H10" />
          <ThinChevron />
        </FormulaBox>
        <Svg w={4} h={9} stroke="none" fill="#888"><path d="M1 1h1v1H1zM1 4h1v1H1zM1 7h1v1H1z" /></Svg>
        <FormulaBox $w={48}>
          <Svg w={9} stroke="#aaa"><path d="M1 1l7 7M8 1L1 8" /></Svg>
          <Svg w={11} h={9} stroke="#aaa"><path d="M1 5l3 3 6-7" /></Svg>
          <em>fx</em>
        </FormulaBox>
        <FormulaBox>
          <input aria-label="Строка формул" defaultValue="Белоусова Татьяна Игоревна" />
          <ThinChevron />
        </FormulaBox>
      </FormulaRow>

      <SheetArea>
        <SheetView><SheetGrid /></SheetView>
        <ScrollColumn>
          <Arrow dir="up" />
          <ScrollTrack $down><Thumb $down /></ScrollTrack>
          <Arrow dir="down" />
        </ScrollColumn>
      </SheetArea>

      <SheetTabs>
        <Svg w={5} h={6} stroke="none" fill="#bbb"><path d="M4 0v6L0 3z" /></Svg>
        <Svg w={5} h={6} stroke="none" fill="#bbb"><path d="M1 0v6l4-3z" /></Svg>
        <Cluster $pad="0 22px 0 14px">
          <SheetTab>Лист2</SheetTab>
          <SheetTab $active>Умная таблица</SheetTab>
        </Cluster>
        <button aria-label="Новый лист"><Svg w={12} stroke="#777"><circle cx="6" cy="6" r="5" /><path d="M6 3v6M3 6h6" /></Svg></button>
        <HScroll>
          <Svg w={10} h={9} stroke="none" fill="#999"><path d="M1 1h1v1H1zM1 4h1v1H1zM1 7h1v1H1z" /></Svg>
          <Arrow dir="left" />
          <ScrollTrack><Thumb /></ScrollTrack>
          <Arrow dir="right" />
        </HScroll>
      </SheetTabs>

      <StatusBar>
        <Cluster $gap={16}>
          Готово
          <Svg w={10} h={10} stroke="#555"><path d="M.5 1h9v8h-9zM.5 3h9M2.500 3v6" /><circle cx="6" cy="6" r="2" /></Svg>
        </Cluster>
        <Cluster $push>
          <ViewButton $active aria-label="Обычный"><Svg w={9}><path d="M.5.5h8v8h-8zM3.200.5v8M5.800.5v8M.5 3.200h8M.5 5.800h8" /></Svg></ViewButton>
          <ViewButton aria-label="Разметка"><Svg w={9}><path d="M.5.5h8v8h-8zM2.500 2.500h4v4h-4zM4.500 2.500v4" /></Svg></ViewButton>
          <ViewButton aria-label="Страничный"><Svg w={9}><path d="M.5.5h8v8h-8zM3.500.5v4h3v-4" /></Svg></ViewButton>
          <Cluster $gap={4} $pad="0 0 0 3px">
            <Svg w={6}><path d="M0 3h6" /></Svg>
            <ZoomRange type="range" aria-label="Масштаб" min="0" max="100" defaultValue="52" />
            <Svg w={6}><path d="M0 3h6M3 0v6" /></Svg>
          </Cluster>
          <Cluster $pad="0 0 0 6px">115 %</Cluster>
        </Cluster>
      </StatusBar>

      <TaskBar>
        <span />
        <AppRow>
          {apps.map(([name, art, running, active]) => (
            <AppButton key={name} aria-label={name} $running={running} $active={active}>
              {art ? <Svg w={16} stroke="none">{art}</Svg> : <ExcelLogo size={16} />}
            </AppButton>
          ))}
        </AppRow>
        <Cluster $end $gap={5} $pad="0 12px 0 0">
          <Svg w={9} stroke="#eee"><path d="M1 6.500l3.500-3.500L8 6.500" /></Svg>
          <Svg w={11} stroke="#eee"><path d="M3 3h7v5H3zM5 10h3M6.500 8v2M1 1h3v3H1z" fill="#14293a" /></Svg>
          <Svg w={10} stroke="none"><circle cx="5" cy="5" r="5" fill="#dfe6e2" /><path d="M2 2l3 4-3 2z" fill="#3c9a50" /><path d="M5 5h5v5H5z" fill="#e8b84a" /></Svg>
          <Svg w={12} stroke="none"><path d="M3 10a3 3 0 0 1 0-5 4 4 0 0 1 7 1 2 2 0 0 1 0 4z" fill="#e8eef2" /></Svg>
          <Svg w={11} stroke="#3b93d8"><rect x="4" y="1" width="3" height="6" rx="1.500" fill="#3b93d8" /><path d="M2 5c0 5 7 5 7 0M5.500 9v2" /></Svg>
          <Cluster $pad="0 6px 0 9px">РУС</Cluster>
          <Svg w={11} stroke="#eee"><path d="M1 5c3-3.500 6-3.500 9 0M2.500 6.800c2-2.300 4-2.300 6 0M4 8.500c1-1 2-1 3 0" /></Svg>
          <Svg w={11} stroke="#eee"><path d="M1 4h2l2.500-2.500v8L3 7H1zM7 4c1 1 1 2 0 3M8.500 2.500c2 2 2 4 0 6" /></Svg>
          <Clock>18:33<br />20.12.2021</Clock>
          <Svg w={11} stroke="#eee"><path d="M5 1c6 1 6 8 1 9-2 .3-3.500-.3-4.500-1.500C5 8 6.500 5 5 1z" /></Svg>
        </Cluster>
      </TaskBar>

      <Hint role="tooltip">Форма</Hint>
      <Marks width="140" height="334" aria-hidden="true">
        <path d="M67 54q4-4 8 0l25 52q2 7-5 6l-15-8-2 228H59l2-228-14 8q-6 1-5-6z" fill="#c63c45" />
        <path fillRule="evenodd" fill="#cb1219" d="M6 23a64 21.500 0 1 0 128 0a64 21.500 0 1 0-128 0zM12 22a58 18.500 0 1 1 117 0a58 18.500 0 1 1-117 0z" />
        <path d="M101 16v10l2-2 2 4 2-1-2-4h3z" fill="#fff" stroke="#222" />
      </Marks>
    </Window>
  );
}
